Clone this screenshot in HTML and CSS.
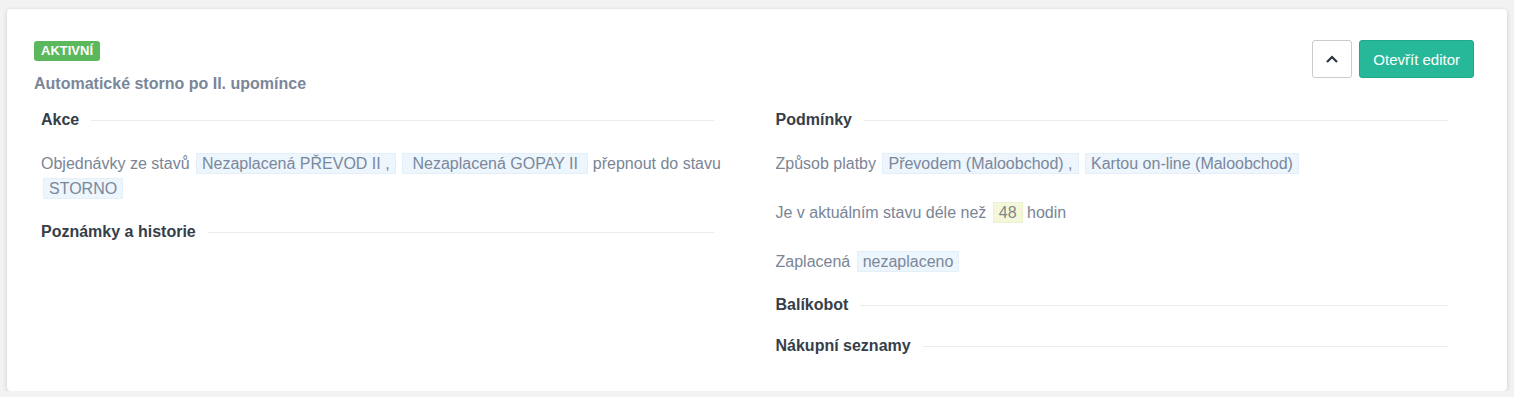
FILE: index.html
```html
<!DOCTYPE html>
<html lang="cs">
<head>
  <meta charset="UTF-8">
  <title>Automatické storno</title>
  <link rel="stylesheet" href="styles.css">
</head>
<body>
  <div class="card">
    <div class="card-head">
      <div>
        <span class="badge">Aktivní</span>
        <div class="title">Automatické storno po II. upomínce</div>
      </div>
      <div class="actions">
        <button class="btn btn-collapse" type="button">
          <svg width="14" height="10" viewBox="0 0 14 10"><path d="M2 8 L7 3 L12 8" fill="none" stroke="#2b3440" stroke-width="2.2"/></svg>
        </button>
        <button class="btn btn-green" type="button">Otevřít editor</button>
      </div>
    </div>

    <div class="cols">
      <div class="col">
        <div class="section-title"><span>Akce</span><i></i></div>
        <p class="text text-wide">
          Objednávky ze stavů <span class="tag">Nezaplacená PŘEVOD II ,</span> <span class="tag">&nbsp;Nezaplacená GOPAY II&nbsp;</span> přepnout do stavu <span class="tag">STORNO</span>
        </p>
        <div class="section-title"><span>Poznámky a historie</span><i></i></div>
      </div>

      <div class="col">
        <div class="section-title"><span>Podmínky</span><i></i></div>
        <div class="conds">
          <p class="text">Způsob platby <span class="tag">Převodem (Maloobchod) ,</span> <span class="tag">Kartou on-line (Maloobchod)</span></p>
          <p class="text">Je v aktuálním stavu déle než <span class="tag tag-num">48</span> hodin</p>
          <p class="text">Zaplacená <span class="tag">nezaplaceno</span></p>
        </div>
        <div class="section-title"><span>Balíkobot</span><i></i></div>
        <div class="section-title"><span>Nákupní seznamy</span><i></i></div>
      </div>
    </div>
  </div>
</body>
</html>
```

FILE: styles.css
```css
body { margin: 0; padding: 9px 7px 0; background: #f2f2f2; font-family: "Liberation Sans", Arial, sans-serif; }
.card {
  background: #fff;
  border-radius: 4px;
  box-shadow: 0 1px 4px rgba(0,0,0,0.16);
  padding: 32px 33px 35px 27px;
}
.card-head { display: flex; justify-content: space-between; align-items: flex-start; }
.badge {
  display: inline-block;
  background: #5cb85c;
  color: #fff;
  font-size: 13px;
  font-weight: bold;
  text-transform: uppercase;
  line-height: 20px;
  padding: 0 7px;
  border-radius: 3px;
}
.title { margin-top: 13px; font-size: 16px; font-weight: bold; line-height: 20px; color: #7a8699; }
.actions { display: flex; gap: 7px; margin-top: -1px; }
.btn { height: 38px; border-radius: 3px; cursor: pointer; font-family: inherit; }
.btn-collapse { width: 40px; background: #fff; border: 1px solid #ccc; display: flex; align-items: center; justify-content: center; padding: 0; }
.btn-green { background: #26b898; border: 1px solid #20a888; color: #fff; font-size: 15px; padding: 0 13px; }

.cols { display: grid; grid-template-columns: 1fr 1fr; gap: 62px; padding: 0 26px 0 7px; margin-top: 16px; }
.col { display: flex; flex-direction: column; gap: 21px; }
.section-title { display: flex; align-items: center; gap: 12px; font-size: 16px; font-weight: bold; line-height: 20px; color: #363e49; }
.section-title i { flex: 1; height: 1px; background: #ebebeb; }
.conds { display: flex; flex-direction: column; gap: 24px; }
.text { margin: 0; font-size: 16px; line-height: 25px; color: #7a8596; }
.text-wide { margin-right: -14px; }
.tag { background: #edf5fd; border: 1px solid #e4effa; padding: 1px 5px; margin-left: 2px; color: #7a889c; }
.tag-num { background: #f5f7db; border-color: #eef0d2; color: #7d8686; }
```
